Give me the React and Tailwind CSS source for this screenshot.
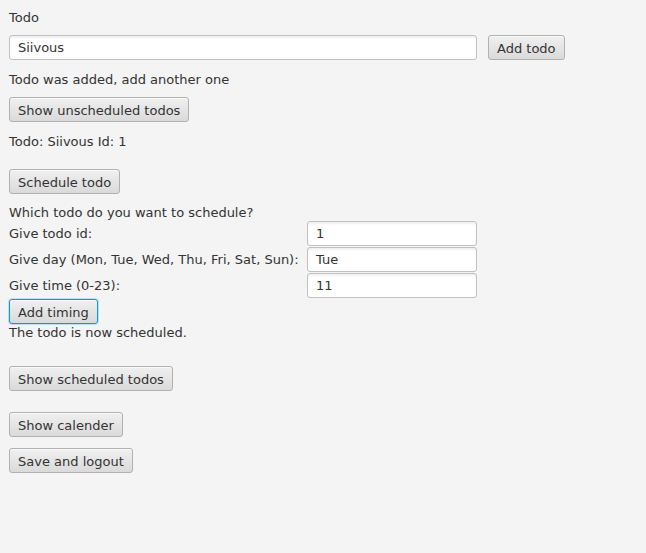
import { useState } from "react";

function FxButton({ children, focused, className = "" }) {
  return (
    <button
      className={`h-[25px] px-[8px] pt-[2px] rounded-[3px] border text-[13px] leading-none text-[#333] bg-gradient-to-b from-[#f0f0f0] to-[#dadada] ${
        focused
          ? "border-[#039ed3] shadow-[0_0_0_1px_#b8e2f3,inset_0_1px_0_#fafafa]"
          : "border-[#b1b1b1] shadow-[inset_0_1px_0_#fafafa]"
      } ${className}`}
    >
      {children}
    </button>
  );
}

function FxField({ value, className = "" }) {
  return (
    <div
      className={`h-[25px] flex items-center px-[8px] pt-[1px] rounded-[3px] border border-[#c2c2c2] bg-white shadow-[inset_0_2px_2px_rgba(0,0,0,0.06)] text-[13px] text-[#333] ${className}`}
    >
      {value}
    </div>
  );
}

function Label({ children, className = "" }) {
  return (
    <div className={`h-[17px] leading-[17px] text-[13px] text-[#333] ${className}`}>
      {children}
    </div>
  );
}

export default function App() {
  const [todo] = useState("Siivous");
  const rows = [
    { label: "Give todo id:", value: "1" },
    { label: "Give day (Mon, Tue, Wed, Thu, Fri, Sat, Sun):", value: "Tue" },
    { label: "Give time (0-23):", value: "11" },
  ];

  return (
    <div
      className="w-[646px] h-[553px] bg-[#f4f4f4] pl-[9px] pt-[9px] flex flex-col items-start"
      style={{ fontFamily: "'DejaVu Sans', sans-serif" }}
    >
      <Label>Todo</Label>

      <div className="mt-[9px] flex items-center gap-[11px]">
        <FxField value={todo} className="w-[468px]" />
        <FxButton>Add todo</FxButton>
      </div>

      <Label className="mt-[11px]">Todo was added, add another one</Label>
      <FxButton className="mt-[9px]">Show unscheduled todos</FxButton>
      <Label className="mt-[11px]">Todo: {todo} Id: 1</Label>

      <FxButton className="mt-[19px]">Schedule todo</FxButton>
      <Label className="mt-[10px]">Which todo do you want to schedule?</Label>

      <div className="grid grid-cols-[298px_170px] gap-y-[1px]">
        {rows.map((r) => (
          <div key={r.label} className="contents">
            <div className="h-[25px] flex items-center pt-[1px] text-[13px] text-[#333]">
              {r.label}
            </div>
            <FxField value={r.value} />
          </div>
        ))}
      </div>

      <FxButton focused className="mt-[1px]">Add timing</FxButton>
      <Label>The todo is now scheduled.</Label>

      <FxButton className="mt-[25px]">Show scheduled todos</FxButton>
      <FxButton className="mt-[21px]">Show calender</FxButton>
      <FxButton className="mt-[11px]">Save and logout</FxButton>
    </div>
  );
}
